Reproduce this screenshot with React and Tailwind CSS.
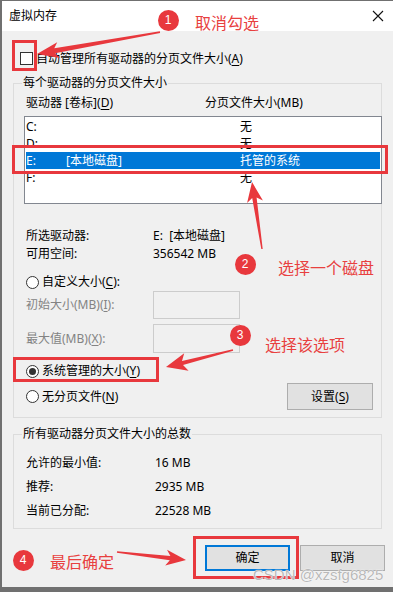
import React from "react";

const font = { fontFamily: '"Noto Sans", "Noto Sans CJK SC", sans-serif' };

function U({ children }) {
  return <span className="underline underline-offset-2">{children}</span>;
}

function Radio({ checked }) {
  return (
    <span className="w-[13px] h-[13px] rounded-full border border-[#333333] bg-white flex items-center justify-center shrink-0">
      {checked && <span className="w-[7px] h-[7px] rounded-full bg-[#333333]" />}
    </span>
  );
}

function Group({ label, children, className }) {
  return (
    <div className={"relative ml-[11px] w-[369px] border border-[#dcdcdc] " + className}>
      <div className="absolute left-[8px] top-[-9px] h-[16px] leading-[16px] bg-[#f0f0f0] px-[1px] text-[12px] text-black">
        {label}
      </div>
      {children}
    </div>
  );
}

function Row({ children, className = "" }) {
  return <div className={"h-[16px] leading-[16px] text-[12px] " + className}>{children}</div>;
}

export default function App() {
  const rows = [
    { d: "C:", l: "", s: "无" },
    { d: "D:", l: "", s: "无" },
    { d: "E:", l: "[本地磁盘]", s: "托管的系统", sel: true },
    { d: "F:", l: "", s: "无" },
  ];
  return (
    <div className="relative w-[393px] h-[592px] overflow-hidden bg-[#707070]" style={font}>
      <div className="ml-[2px] mt-[1px] w-[391px] h-[586px] bg-[#f0f0f0] flex flex-col text-black">
        {/* title bar */}
        <div className="h-[30px] bg-white flex items-center justify-between pl-[7px] pr-[8px] shrink-0">
          <span className="text-[12px] leading-[16px]">虚拟内存</span>
          <svg width="12" height="12" viewBox="0 0 12 12" className="mr-[1px]">
            <path d="M1 1 L11 11 M11 1 L1 11" stroke="#111" strokeWidth="1.1" />
          </svg>
        </div>

        {/* checkbox */}
        <div className="mt-[21px] pl-[18px] h-[13px] flex items-center gap-[3px]">
          <span className="w-[13px] h-[13px] border border-[#333333] bg-white shrink-0" />
          <span className="text-[12px] leading-[16px]">
            自动管理所有驱动器的分页文件大小(<U>A</U>)
          </span>
        </div>

        {/* group 1 */}
        <Group label="每个驱动器的分页文件大小" className="mt-[18px] pb-[7px]">
          <Row className="mt-[11px] pl-[12px] grid grid-cols-[179px_1fr]">
            <span>
              驱动器 [卷标](<U>D</U>)
            </span>
            <span>分页文件大小(MB)</span>
          </Row>
          <div className="mt-[5px] ml-[10px] w-[358px] h-[88px] border border-[#828790] bg-white pt-[1px]">
            {rows.map((r) => (
              <div
                key={r.d}
                className={
                  "mx-[1px] h-[17px] leading-[17px] text-[12px] grid grid-cols-[40px_174px_1fr] " +
                  (r.sel ? "bg-[#0078d7] text-white" : "text-black")
                }
              >
                <span>{r.d}</span>
                <span>{r.l}</span>
                <span>{r.s}</span>
              </div>
            ))}
          </div>
          <Row className="mt-[24px] pl-[12px] grid grid-cols-[127px_1fr]">
            <span>所选驱动器:</span>
            <span>E:&nbsp;&nbsp;[本地磁盘]</span>
          </Row>
          <Row className="mt-[2px] pl-[12px] grid grid-cols-[127px_1fr]">
            <span>可用空间:</span>
            <span>356542 MB</span>
          </Row>
          <Row className="mt-[12px] pl-[12px] flex items-center gap-[3px]">
            <Radio />
            <span>
              自定义大小(<U>C</U>):
            </span>
          </Row>
          <div className="mt-[1px] pl-[12px] h-[28px] flex items-center">
            <span className="w-[127px] text-[12px] leading-[16px] text-[#838383]">
              初始大小(MB)(<U>I</U>):
            </span>
            <span className="w-[87px] h-[28px] border border-[#cccccc] bg-[#f0f0f0]" />
          </div>
          <div className="mt-[5px] pl-[12px] h-[29px] flex items-center">
            <span className="w-[127px] text-[12px] leading-[16px] text-[#838383]">
              最大值(MB)(<U>X</U>):
            </span>
            <span className="w-[87px] h-[29px] border border-[#cccccc] bg-[#f0f0f0]" />
          </div>
          <Row className="mt-[10px] pl-[12px] flex items-center gap-[3px]">
            <Radio checked />
            <span>
              系统管理的大小(<U>Y</U>)
            </span>
          </Row>
          <div className="mt-[4px] pl-[12px] pr-[8px] h-[27px] flex items-center justify-between">
            <div className="flex items-center gap-[3px] text-[12px] leading-[16px]">
              <Radio />
              <span>
                无分页文件(<U>N</U>)
              </span>
            </div>
            <button className="w-[86px] h-[27px] bg-[#e1e1e1] border border-[#adadad] text-[12px] leading-[16px]">
              设置(<U>S</U>)
            </button>
          </div>
        </Group>

        {/* group 2 */}
        <Group label="所有驱动器分页文件大小的总数" className="mt-[16px] pb-[9px]">
          <Row className="mt-[20px] pl-[12px] grid grid-cols-[129px_1fr]">
            <span>允许的最小值:</span>
            <span>16 MB</span>
          </Row>
          <Row className="mt-[8px] pl-[12px] grid grid-cols-[129px_1fr]">
            <span>推荐:</span>
            <span>2935 MB</span>
          </Row>
          <Row className="mt-[8px] pl-[12px] grid grid-cols-[129px_1fr]">
            <span>当前已分配:</span>
            <span>22528 MB</span>
          </Row>
        </Group>

        {/* buttons */}
        <div className="mt-[16px] pl-[203px] flex gap-[10px]">
          <button className="w-[85px] h-[26px] bg-[#e1e1e1] border-2 border-[#0078d7] text-[12px] leading-[16px]">
            确定
          </button>
          <button className="w-[85px] h-[26px] bg-[#e1e1e1] border border-[#adadad] text-[12px] leading-[16px]">
            取消
          </button>
        </div>
      </div>

      {/* annotations overlay */}
      <svg className="absolute inset-0 pointer-events-none" width="393" height="592" viewBox="0 0 393 592">
        <g fill="none" stroke="#e8383d" strokeWidth="3">
          <rect x="13.5" y="41.5" width="22" height="28" />
          <rect x="13.5" y="146.5" width="373" height="26" />
          <rect x="14.5" y="358.5" width="143" height="22" />
          <rect x="194.5" y="537.5" width="103" height="40" />
        </g>
        <g fill="#e8383d">
          <polygon points="37,54 60,58 55.1,53.3 160.1,33 159.9,31.2 54.3,48.3 57.2,42.2" />
          <polygon points="252,182 262.9,200.6 256.6,197.5 262.7,248.9 261.3,249.1 252.2,198.1 247.1,203" />
          <polygon points="166,367 188.6,370.7 183,365.1 233.2,350.7 232.8,349.3 182,360.9 184.2,353.3" />
          <polygon points="186,560 167,549.8 170.4,555.9 117.1,551.2 116.9,552.8 169.8,560.3 165.2,565.6" />
        </g>
      </svg>

      {[
        { n: "1", x: 168, y: 20 },
        { n: "2", x: 245, y: 264 },
        { n: "3", x: 240, y: 335 },
        { n: "4", x: 23, y: 560 },
      ].map((c) => (
        <div
          key={c.n}
          className="absolute w-[21px] h-[21px] rounded-full bg-[#e8383d] text-white text-[12px] leading-[21px] text-center"
          style={{ left: c.x - 10.5, top: c.y - 10.5, fontFamily: '"Liberation Sans", sans-serif' }}
        >
          {c.n}
        </div>
      ))}

      <div className="absolute left-[195px] top-[12px] text-[16px] leading-[22px] text-[#e8403f]">取消勾选</div>
      <div className="absolute left-[278px] top-[257px] text-[16px] leading-[22px] text-[#e8403f]">选择一个磁盘</div>
      <div className="absolute left-[265px] top-[334px] text-[16px] leading-[22px] text-[#e8403f]">选择该选项</div>
      <div className="absolute left-[50px] top-[551px] text-[16px] leading-[22px] text-[#e8403f]">最后确定</div>

      <div
        className="absolute left-[253px] top-[565px] text-[15px] leading-[20px] text-[#b9b9b9]"
        style={{
          fontFamily: '"Liberation Sans", sans-serif',
          textShadow: "0 0 1px #ffffff, 0 0 1px #ffffff",
        }}
      >
        CSDN @xzsfg6825
      </div>
    </div>
  );
}
